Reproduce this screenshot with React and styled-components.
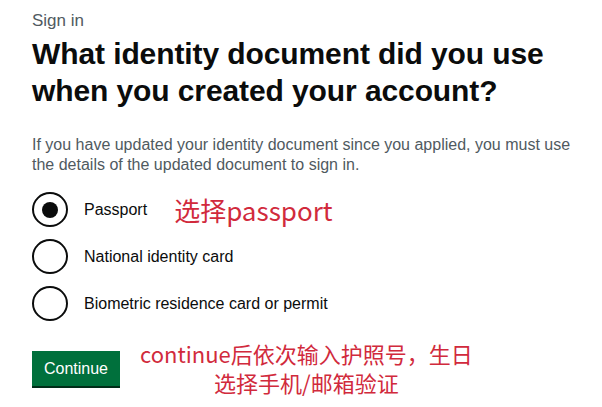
import React from "react";
import styled, { createGlobalStyle } from "styled-components";

const Global = createGlobalStyle`
  html, body { margin: 0; padding: 0; background: #fff; }
  body { font-family: "Liberation Sans", Arial, sans-serif; color: #0b0c0c; }
`;

const Page = styled.main`
  width: 602px;
  height: 407px;
  box-sizing: border-box;
  padding: 10px 0 0 32px;
  overflow: hidden;
`;

const Caption = styled.span`
  display: block;
  font-size: 17px;
  line-height: 22px;
  color: #505a5f;
`;

const Heading = styled.h1`
  margin: 3px 0 0;
  width: 560px;
  font-size: 30px;
  line-height: 37px;
  font-weight: 700;
  letter-spacing: -0.1px;
`;

const Hint = styled.p`
  margin: 26px 0 0;
  width: 560px;
  font-size: 16px;
  line-height: 20px;
  color: #505a5f;
`;

const Options = styled.div`
  margin-top: 17px;
  display: flex;
  flex-direction: column;
  gap: 12px;
`;

const Row = styled.label`
  display: flex;
  align-items: center;
  gap: 16px;
  height: 35px;
`;

const Radio = styled.span`
  position: relative;
  width: 36px;
  height: 35px;
  box-sizing: border-box;
  border: 2px solid #0b0c0c;
  border-radius: 50%;
  flex: none;
  &::after {
    content: "";
    display: ${(p) => (p.$checked ? "block" : "none")};
    position: absolute;
    left: 8px;
    top: 7.5px;
    width: 16px;
    height: 16px;
    border-radius: 50%;
    background: #0b0c0c;
  }
`;

const Label = styled.span`
  font-size: 16px;
  color: #0b0c0c;
`;

const Note = styled.span`
  margin-left: 11px;
  font-family: "Noto Sans CJK SC", "Liberation Sans", sans-serif;
  font-size: 26px;
  color: #d12a3c;
`;

const Footer = styled.div`
  margin-top: 18px;
  display: flex;
  align-items: flex-start;
  gap: 20px;
`;

const Button = styled.button`
  margin-top: 12px;
  width: 88px;
  height: 35px;
  border: 0;
  padding: 0;
  background: #00703c;
  box-shadow: 0 2px 0 #002d18;
  color: #fff;
  font-family: inherit;
  font-size: 16px;
`;

const Annotation = styled.div`
  font-family: "Noto Sans CJK SC", "Liberation Sans", sans-serif;
  font-size: 22px;
  line-height: 29px;
  color: #d12a3c;
  text-align: center;
`;

const options = [
  { text: "Passport", checked: true, note: "选择passport" },
  { text: "National identity card" },
  { text: "Biometric residence card or permit" },
];

export default function App() {
  return (
    <Page>
      <Global />
      <Caption>Sign in</Caption>
      <Heading>What identity document did you use when you created your account?</Heading>
      <Hint>
        If you have updated your identity document since you applied, you must use the details of the
        updated document to sign in.
      </Hint>
      <Options>
        {options.map((o) => (
          <Row key={o.text}>
            <Radio $checked={o.checked} />
            <Label>{o.text}</Label>
            {o.note && <Note>{o.note}</Note>}
          </Row>
        ))}
      </Options>
      <Footer>
        <Button>Continue</Button>
        <Annotation>
          continue后依次输入护照号，生日
          <br />
          选择手机/邮箱验证
        </Annotation>
      </Footer>
    </Page>
  );
}
